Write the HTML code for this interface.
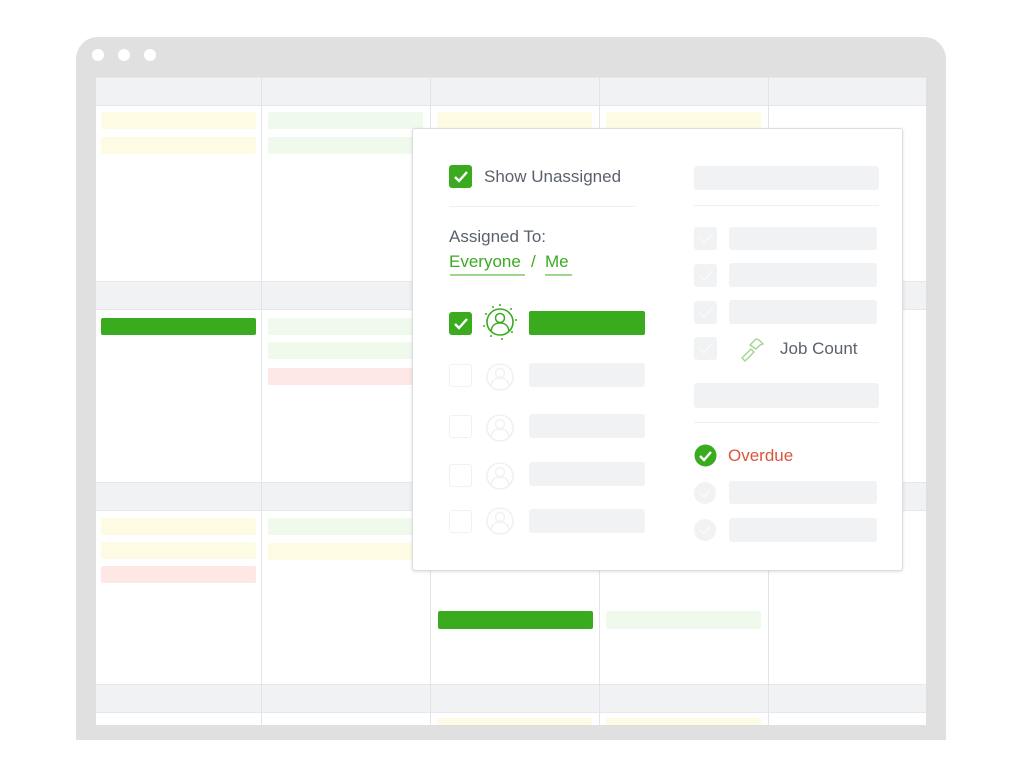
<!DOCTYPE html>
<html><head><meta charset="utf-8"><style>
*{margin:0;padding:0;box-sizing:border-box}
body{width:1024px;height:768px;background:#fff;position:relative;overflow:hidden;font-family:"Liberation Sans",sans-serif}
.a{position:absolute}
.hd{position:absolute;left:96px;width:830px;height:29px;background:#f1f2f4;border-top:1px solid #e6e7ea;border-bottom:1px solid #e6e7ea}
.vl{position:absolute;top:77px;height:648px;width:1px;background:#e3e4e7}
.b{position:absolute;height:17px;border-radius:2px}
.y{background:#fdfbe3}.lg{background:#eff9ec}.r{background:#fde8e5}.g{background:#3aab1f}
.gr{background:#f1f2f4;border-radius:3px}
.t{position:absolute;font-size:17px;color:#5b616b;white-space:nowrap}
.cb{position:absolute;width:23px;height:23px;border-radius:3px}
</style></head><body>
<div class="a" style="left:76px;top:37px;width:870px;height:703px;background:#e0e0e0;border-radius:22px 22px 0 0"></div>
<div class="a" style="left:92px;top:49px;width:12px;height:12px;border-radius:50%;background:#fff"></div>
<div class="a" style="left:118px;top:49px;width:12px;height:12px;border-radius:50%;background:#fff"></div>
<div class="a" style="left:144px;top:49px;width:12px;height:12px;border-radius:50%;background:#fff"></div>
<div class="a" style="left:96px;top:77px;width:830px;height:648px;background:#fff"></div>
<div class="hd" style="top:77px"></div>
<div class="hd" style="top:281px"></div>
<div class="hd" style="top:482px"></div>
<div class="hd" style="top:684px"></div>
<div class="vl" style="left:261px"></div><div class="vl" style="left:430px"></div><div class="vl" style="left:599px"></div><div class="vl" style="left:768px"></div>
<div class="b y" style="left:101px;top:112px;width:155px"></div>
<div class="b y" style="left:101px;top:137px;width:155px"></div>
<div class="b lg" style="left:268px;top:112px;width:155px"></div>
<div class="b lg" style="left:268px;top:137px;width:155px"></div>
<div class="b y" style="left:437px;top:112px;width:155px"></div>
<div class="b y" style="left:606px;top:112px;width:155px"></div>
<div class="b g" style="left:101px;top:318px;width:155px"></div>
<div class="b lg" style="left:268px;top:318px;width:155px"></div>
<div class="b lg" style="left:268px;top:342px;width:155px"></div>
<div class="b r" style="left:268px;top:368px;width:155px"></div>
<div class="b y" style="left:101px;top:518px;width:155px"></div>
<div class="b y" style="left:101px;top:542px;width:155px"></div>
<div class="b r" style="left:101px;top:566px;width:155px"></div>
<div class="b lg" style="left:268px;top:518px;width:155px"></div>
<div class="b y" style="left:268px;top:543px;width:155px"></div>
<div class="b g" style="left:438px;top:611px;width:155px;height:18px"></div>
<div class="b lg" style="left:606px;top:611px;width:155px;height:18px"></div>
<div class="b y" style="left:437px;top:718px;width:155px;height:7px"></div>
<div class="b y" style="left:606px;top:718px;width:155px;height:7px"></div>

<div class="a" style="left:412px;top:128px;width:491px;height:443px;background:#fff;border:1px solid #dcdde0;border-radius:3px;box-shadow:0 1px 3px rgba(0,0,0,.12)"></div>
<div class="cb g" style="left:449px;top:165px"></div>
<svg class="a" style="left:449px;top:165px" width="23" height="23"><path d="M6 12l4 4 8-9" stroke="#fff" stroke-width="2.4" fill="none"/></svg>
<div class="t" style="left:484px;top:167px">Show Unassigned</div>
<div class="a" style="left:449px;top:206px;width:186px;height:1px;background:#eef0f2"></div>
<div class="t" style="left:449px;top:227px">Assigned To:</div>
<div class="t" style="left:449px;top:252px;color:#3aab1f">Everyone</div>
<div class="a" style="left:450px;top:274px;width:75px;height:2px;background:#9fd68f"></div>
<div class="t" style="left:531px;top:252px;color:#3aab1f">/</div>
<div class="t" style="left:545px;top:252px;color:#3aab1f">Me</div>
<div class="a" style="left:545px;top:274px;width:27px;height:2px;background:#9fd68f"></div>

<div class="cb g" style="left:449px;top:312px"></div>
<svg class="a" style="left:449px;top:312px" width="23" height="23"><path d="M6 12l4 4 8-9" stroke="#fff" stroke-width="2.4" fill="none"/></svg>
<svg class="a" style="left:480px;top:302px" width="40" height="40"><circle cx="20" cy="20" r="13" stroke="#3aab1f" stroke-width="1.6" fill="none"/><circle cx="20" cy="16" r="4.5" stroke="#3aab1f" stroke-width="1.5" fill="none"/><path d="M11 29c1-6 4-8 9-8s8 2 9 8" stroke="#3aab1f" stroke-width="1.5" fill="none"/><g fill="#3aab1f"><circle cx="20" cy="3" r="1"/><circle cx="31" cy="7" r="1"/><circle cx="36" cy="18" r="1"/><circle cx="32" cy="30" r="1"/><circle cx="22" cy="37" r="1"/><circle cx="11" cy="34" r="1"/><circle cx="4" cy="24" r="1"/><circle cx="6" cy="12" r="1"/><circle cx="13" cy="5" r="1"/></g></svg>
<div class="a" style="left:529px;top:311px;width:116px;height:24px;background:#3aab1f;border-radius:2px"></div>

<div class="cb" style="left:449px;top:364px;border:1.5px solid #f0f1f3"></div>
<svg class="a" style="left:484px;top:361px" width="32" height="32"><circle cx="16" cy="16" r="13" stroke="#f0f1f3" stroke-width="1.6" fill="none"/><circle cx="16" cy="12" r="4.5" stroke="#f0f1f3" stroke-width="1.5" fill="none"/><path d="M7 25c1-6 4-8 9-8s8 2 9 8" stroke="#f0f1f3" stroke-width="1.5" fill="none"/></svg>
<div class="a gr" style="left:529px;top:363px;width:116px;height:24px"></div>
<div class="cb" style="left:449px;top:415px;border:1.5px solid #f0f1f3"></div>
<svg class="a" style="left:484px;top:412px" width="32" height="32"><circle cx="16" cy="16" r="13" stroke="#f0f1f3" stroke-width="1.6" fill="none"/><circle cx="16" cy="12" r="4.5" stroke="#f0f1f3" stroke-width="1.5" fill="none"/><path d="M7 25c1-6 4-8 9-8s8 2 9 8" stroke="#f0f1f3" stroke-width="1.5" fill="none"/></svg>
<div class="a gr" style="left:529px;top:414px;width:116px;height:24px"></div>
<div class="cb" style="left:449px;top:464px;border:1.5px solid #f0f1f3"></div>
<svg class="a" style="left:484px;top:460px" width="32" height="32"><circle cx="16" cy="16" r="13" stroke="#f0f1f3" stroke-width="1.6" fill="none"/><circle cx="16" cy="12" r="4.5" stroke="#f0f1f3" stroke-width="1.5" fill="none"/><path d="M7 25c1-6 4-8 9-8s8 2 9 8" stroke="#f0f1f3" stroke-width="1.5" fill="none"/></svg>
<div class="a gr" style="left:529px;top:462px;width:116px;height:24px"></div>
<div class="cb" style="left:449px;top:510px;border:1.5px solid #f0f1f3"></div>
<svg class="a" style="left:484px;top:505px" width="32" height="32"><circle cx="16" cy="16" r="13" stroke="#f0f1f3" stroke-width="1.6" fill="none"/><circle cx="16" cy="12" r="4.5" stroke="#f0f1f3" stroke-width="1.5" fill="none"/><path d="M7 25c1-6 4-8 9-8s8 2 9 8" stroke="#f0f1f3" stroke-width="1.5" fill="none"/></svg>
<div class="a gr" style="left:529px;top:509px;width:116px;height:24px"></div>

<div class="a gr" style="left:694px;top:166px;width:185px;height:24px"></div>
<div class="a" style="left:694px;top:205px;width:185px;height:1px;background:#eef0f2"></div>
<div class="cb" style="left:694px;top:227px;background:#f1f2f4"></div>
<div class="cb" style="left:694px;top:264px;background:#f1f2f4"></div>
<div class="cb" style="left:694px;top:301px;background:#f1f2f4"></div>
<div class="cb" style="left:694px;top:337px;background:#f1f2f4"></div>
<svg class="a" style="left:694px;top:227px" width="23" height="140"><g stroke="#fafafb" stroke-width="1.6" fill="none"><path d="M6 12l4 4 8-9"/><path d="M6 49l4 4 8-9"/><path d="M6 86l4 4 8-9"/><path d="M6 122l4 4 8-9"/></g></svg>
<div class="a gr" style="left:729px;top:227px;width:148px;height:23px"></div>
<div class="a gr" style="left:729px;top:263px;width:148px;height:24px"></div>
<div class="a gr" style="left:729px;top:300px;width:148px;height:24px"></div>
<svg class="a" style="left:738px;top:336px" width="28" height="26"><path d="M4 22l9-9 3 3-9 9zM12 9l6-6 3 1 4 4-3 1-4 4z" stroke="#9fd68f" stroke-width="1.4" fill="none" stroke-linejoin="round"/></svg>
<div class="t" style="left:780px;top:339px">Job Count</div>
<div class="a gr" style="left:694px;top:383px;width:185px;height:25px"></div>
<div class="a" style="left:694px;top:422px;width:185px;height:1px;background:#eef0f2"></div>
<svg class="a" style="left:694px;top:444px" width="23" height="23"><circle cx="11.5" cy="11.5" r="11" fill="#3aab1f"/><path d="M6 12l4 4 7-8" stroke="#fff" stroke-width="2.4" fill="none"/></svg>
<div class="t" style="left:728px;top:446px;color:#d9553c">Overdue</div>
<div class="a" style="left:694px;top:482px;width:22px;height:22px;border-radius:50%;background:#f1f2f4"></div>
<div class="a" style="left:694px;top:519px;width:22px;height:22px;border-radius:50%;background:#f1f2f4"></div>
<svg class="a" style="left:694px;top:482px" width="22" height="60"><g stroke="#fafafb" stroke-width="1.6" fill="none"><path d="M6 11l4 4 6-7"/><path d="M6 48l4 4 6-7"/></g></svg>
<div class="a gr" style="left:729px;top:481px;width:148px;height:23px"></div>
<div class="a gr" style="left:729px;top:518px;width:148px;height:24px"></div>
</body></html>
